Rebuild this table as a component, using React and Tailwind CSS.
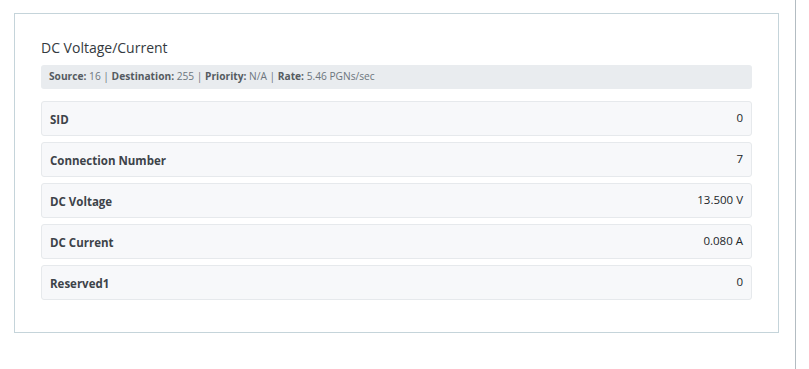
export default function App() {
  const rows = [
    ["SID", "0"],
    ["Connection Number", "7"],
    ["DC Voltage", "13.500 V"],
    ["DC Current", "0.080 A"],
    ["Reserved1", "0"],
  ];
  return (
    <div className="w-[796px] h-[369px] border-r border-[#b3bcc2] bg-white" style={{ fontFamily: '"Open Sans", "Noto Sans", sans-serif' }}>
      <div className="pt-[13px] pl-[14px]">
        <div className="w-[765px] h-[320px] border border-[#c5d4da] px-[26px] pt-[24px]">
          <div className="text-[14px] leading-[20px] text-[#343a40] mb-[7px]">DC Voltage/Current</div>
          <div className="h-[24px] rounded-[3px] bg-[#e9ecef] px-[8px] flex items-center text-[10.2px] text-[#6c757d]">
            <span>
              <b className="font-bold text-[#555b61]">Source:</b> 16 | <b className="font-bold text-[#555b61]">Destination:</b> 255 | <b className="font-bold text-[#555b61]">Priority:</b> N/A | <b className="font-bold text-[#555b61]">Rate:</b> 5.46 PGNs/sec
            </span>
          </div>
          <div className="mt-[12px] flex flex-col gap-[6px]">
            {rows.map(([k, v]) => (
              <div key={k} className="h-[35px] rounded-[3px] border border-[#e6e9ec] bg-[#f7f8fa] px-[8px] flex justify-between">
                <span className="pt-[9px] text-[11.5px] font-bold text-[#3d4349]">{k}</span>
                <span className="pt-[7px] text-[11.5px] font-medium text-[#212529]">{v}</span>
              </div>
            ))}
          </div>
        </div>
      </div>
    </div>
  );
}
